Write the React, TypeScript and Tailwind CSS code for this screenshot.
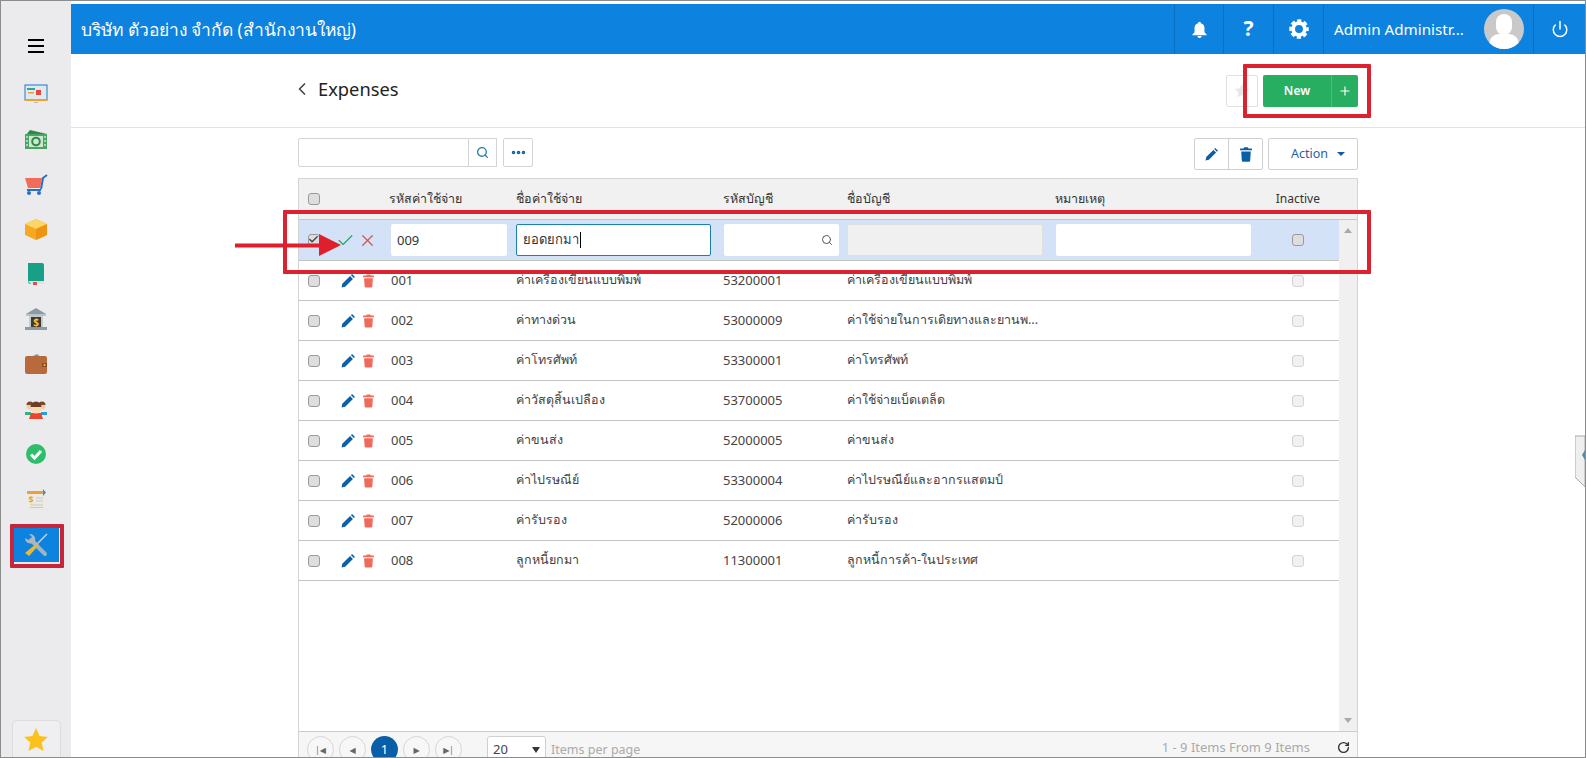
import { ChevronLeft, Search, MoreHorizontal, Plus, Power, RotateCw, Check, X } from 'lucide-react'

const FONT = "font-['Noto_Sans','Open_Sans','DejaVu_Sans',sans-serif]"
const GRID = 'grid grid-cols-[92px_125px_207px_124px_208px_205px_80px] items-center'

const ROWS = [
  ['001', 'ค่าเครื่องเขียนแบบพิมพ์', '53200001', 'ค่าเครื่องเขียนแบบพิมพ์'],
  ['002', 'ค่าทางด่วน', '53000009', 'ค่าใช้จ่ายในการเดิยทางและยานพ...'],
  ['003', 'ค่าโทรศัพท์', '53300001', 'ค่าโทรศัพท์'],
  ['004', 'ค่าวัสดุสิ้นเปลือง', '53700005', 'ค่าใช้จ่ายเบ็ดเตล็ด'],
  ['005', 'ค่าขนส่ง', '52000005', 'ค่าขนส่ง'],
  ['006', 'ค่าไปรษณีย์', '53300004', 'ค่าไปรษณีย์และอากรแสตมป์'],
  ['007', 'ค่ารับรอง', '52000006', 'ค่ารับรอง'],
  ['008', 'ลูกหนี้ยกมา', '11300001', 'ลูกหนี้การค้า-ในประเทศ'],
]

function Pencil({ className }: { className?: string }) {
  return (
    <svg viewBox="0 0 24 24" className={className} fill="currentColor">
      <path d="M1 23l1.200-6.200L15.500 3.500l5 5L7.200 21.800 1 23zM17 2l2-2 5 5-2 2-5-5z" />
    </svg>
  )
}

function Trash({ className }: { className?: string }) {
  return (
    <svg viewBox="0 0 20 24" className={className} fill="currentColor">
      <path d="M7 0h6l1 2h5a1 1 0 0 1 1 1v2H0V3a1 1 0 0 1 1-1h5l1-2zM2 7h16l-1 15a2 2 0 0 1-2 2H5a2 2 0 0 1-2-2L2 7z" />
    </svg>
  )
}

function Box({ light }: { light?: boolean }) {
  return (
    <span
      className={
        light
          ? 'block h-[12px] w-[12px] rounded-[3px] border border-[#d4d4d4] bg-[#f1f1f1]'
          : 'block h-[12px] w-[12px] rounded-[3px] border border-[#9a9a9a] bg-[#dedede]'
      }
    />
  )
}

function SideIcon({ children, active }: { children: React.ReactNode; active?: boolean }) {
  return (
    <div className={active ? 'flex h-[35px] w-[46px] items-center justify-center bg-[#0d82df]' : 'flex h-[45px] w-[46px] items-center justify-center'}>
      <svg viewBox="0 0 24 24" className="h-[24px] w-[24px]">
        {children}
      </svg>
    </div>
  )
}

function Sidebar() {
  return (
    <aside className="flex w-[70px] shrink-0 flex-col items-center bg-[#ebebed]">
      <div className="mt-[37px] mb-[17px] flex h-[16px] flex-col justify-between py-[1px]">
        <span className="block h-[2px] w-[16px] bg-black" />
        <span className="block h-[2px] w-[16px] bg-black" />
        <span className="block h-[2px] w-[16px] bg-black" />
      </div>
      <SideIcon>
        <rect x="1" y="3" width="22" height="15" fill="#dfe9f2" stroke="#3f8fc9" strokeWidth="1.2" />
        <rect x="1" y="17" width="22" height="2" fill="#f0a030" />
        <rect x="3" y="6" width="8" height="2" fill="#35a0a0" />
        <rect x="12" y="8" width="5" height="5" fill="#e4473d" />
        <rect x="4" y="10" width="6" height="1.5" fill="#f0a030" />
        <rect x="10" y="20" width="4" height="1" fill="#bbbbbb" />
      </SideIcon>
      <SideIcon>
        <path d="M2 8l4-5 17 4v2z" fill="#2f8a48" />
        <rect x="1" y="7" width="22" height="15" fill="#4aa564" />
        <rect x="5" y="9" width="14" height="11" fill="#cde8cf" />
        <circle cx="12" cy="14.500" r="3.800" fill="none" stroke="#2f8a48" strokeWidth="2" />
        <path d="M3 9v11M21 9v11" stroke="#cde8cf" strokeWidth="1.500" strokeDasharray="2 2" />
      </SideIcon>
      <SideIcon>
        <path d="M1 6h17l-2 10H4z" fill="#f26b5b" />
        <path d="M17 17l2-11 4-3" stroke="#2b6fc4" strokeWidth="2" fill="none" />
        <path d="M3 18h14" stroke="#2b6fc4" strokeWidth="2" />
        <circle cx="5" cy="21" r="2" fill="#2b6fc4" />
        <circle cx="15" cy="21" r="2" fill="#2b6fc4" />
      </SideIcon>
      <SideIcon>
        <path d="M1 7l11-5 11 5v11l-11 5-11-5z" fill="#f7a823" />
        <path d="M1 7l11-5 11 5-11 5z" fill="#fbd566" />
        <path d="M12 12l11-5v11l-11 5z" fill="#ee9412" />
      </SideIcon>
      <SideIcon>
        <path d="M4 1h14a2 2 0 0 1 2 2v19H7a3 3 0 0 1-3-3z" fill="#17a085" />
        <path d="M4 19h16v3H7z" fill="#d8e6e2" />
        <rect x="9" y="20" width="4" height="3" fill="#d9534f" />
      </SideIcon>
      <SideIcon>
        <path d="M12 1l10 6H2z" fill="#8d9aa3" />
        <rect x="2" y="7" width="20" height="2" fill="#b8c2c8" />
        <rect x="5" y="9" width="14" height="11" fill="#c6cdd2" />
        <rect x="7" y="10" width="10" height="10" fill="#3b3b30" />
        <text x="12" y="18.500" textAnchor="middle" fontSize="10" fontWeight="700" fill="#f2c33a">$</text>
        <rect x="1" y="20" width="22" height="3" fill="#8d9aa3" />
      </SideIcon>
      <SideIcon>
        <path d="M7 5l6-3 4 3z" fill="#4db6a0" />
        <rect x="1" y="4" width="22" height="18" rx="2" fill="#b96a3c" />
        <rect x="18" y="11" width="5" height="4" fill="#8c4d28" />
        <circle cx="20.500" cy="13" r="1" fill="#f2c33a" />
      </SideIcon>
      <SideIcon>
        <circle cx="6" cy="9" r="3.500" fill="#f7cda6" />
        <circle cx="18" cy="9" r="3.500" fill="#f7cda6" />
        <path d="M2.500 8a3.500 3.500 0 0 1 7 0zM14.500 8a3.500 3.500 0 0 1 7 0z" fill="#7a4a2c" />
        <path d="M1 15h6v3H1z" fill="#2fb38a" />
        <path d="M17 15h6v3h-6z" fill="#2d9bd8" />
        <path d="M5 22l2-6h10l2 6z" fill="#e8452e" />
        <circle cx="12" cy="11" r="5.500" fill="#fbd9b5" />
        <path d="M6.500 10a5.500 5.500 0 0 1 11 0z" fill="#6b3f25" />
      </SideIcon>
      <SideIcon>
        <circle cx="12" cy="12" r="10" fill="#2ebd6b" />
        <path d="M7 12.500l3.500 3.500L17 9" fill="none" stroke="#fff" strokeWidth="3" />
      </SideIcon>
      <SideIcon>
        <rect x="4" y="7" width="17" height="16" fill="#eceae4" />
        <rect x="3" y="4" width="16" height="3" fill="#e9a13b" />
        <path d="M19 2l3 3.500-3 3.500z" fill="#4a8fb5" />
        <text x="7" y="16" textAnchor="middle" fontSize="9" fontWeight="700" fill="#e9a13b">$</text>
        <path d="M12 11h7M12 14h7M6 18h13M6 20.500h13" stroke="#c9c9c9" />
      </SideIcon>
      <div className="mt-[6px]">
        <SideIcon active>
          <path d="M7 7l14 14" stroke="#9fb4c2" strokeWidth="4" strokeLinecap="round" />
          <path d="M23 1L12 12" stroke="#c9d3da" strokeWidth="1.500" />
          <path d="M1 20l12-10 2 2L5 23z" fill="#f0b62e" />
          <path d="M1 5a5.500 5.500 0 0 0 8 5l3 3 2-2-3-3a5.500 5.500 0 0 0-6-7l3 3-2.500 3.500z" fill="#aab8c2" />
        </SideIcon>
      </div>
      <div className="mt-auto flex h-[37px] w-[49px] items-start justify-center rounded-t-[5px] border border-b-0 border-[#dcdcdc] bg-[#efeff1] pt-[7px]">
        <svg viewBox="0 0 24 24" className="h-[24px] w-[24px]" fill="#fdc11e">
          <path d="M12 0l3.600 8 8.400.9-6.300 5.700 1.800 8.400L12 18.700 4.500 23l1.800-8.400L0 8.900 8.400 8z" />
        </svg>
      </div>
    </aside>
  )
}

function TopBar() {
  return (
    <header className="flex h-[50px] shrink-0 items-stretch bg-[#0d82df] text-white">
      <div className="flex-1 pl-[10px] text-[17.400px] leading-[50px]">บริษัท ตัวอย่าง จำกัด (สำนักงานใหญ่)</div>
      <div className="flex w-[49px] items-center justify-center border-l border-[#0b6fbf]">
        <svg viewBox="0 0 24 24" className="h-[17px] w-[17px]" fill="currentColor">
          <path d="M12 1a2 2 0 0 1 2 2 7 7 0 0 1 5 7v6l3 3v1H2v-1l3-3v-6a7 7 0 0 1 5-7 2 2 0 0 1 2-2zM9 21h6a3 3 0 0 1-6 0z" />
        </svg>
      </div>
      <div className="flex w-[50px] items-center justify-center border-l border-[#0b6fbf] text-[21px] font-bold">?</div>
      <div className="flex w-[50px] items-center justify-center border-l border-[#0b6fbf]">
        <svg viewBox="0 0 24 24" className="h-[20px] w-[20px]" fill="none" stroke="currentColor">
          <circle cx="12" cy="12" r="7" strokeWidth="4.500" />
          <circle cx="12" cy="12" r="10.200" strokeWidth="3" strokeDasharray="5 3.010" strokeDashoffset="2.500" />
        </svg>
      </div>
      <div className="flex w-[210px] items-center border-l border-[#0b6fbf] pl-[10px]">
        <span className="w-[150px] text-[15.200px]">Admin Administr...</span>
        <div className="relative h-[40px] w-[40px] overflow-hidden rounded-full bg-[#c9c9c9]">
          <span className="absolute top-[5px] left-[12px] h-[21px] w-[16px] rounded-full bg-white" />
          <span className="absolute top-[25px] left-[5px] h-[20px] w-[30px] rounded-t-[10px] bg-white" />
        </div>
      </div>
      <div className="flex w-[52px] items-center justify-center border-l border-[#0b6fbf]">
        <Power size={18} strokeWidth={2} />
      </div>
    </header>
  )
}

function EditRow() {
  const input = 'h-[32px] rounded-[2px] px-[6px] text-[13px] text-[#333]'
  return (
    <div className={`${GRID} h-[41px] border-b border-[#c4c4c4] bg-[#d3e2f7]`}>
      <div className="flex items-center pl-[9px]">
        <span className="relative block">
          <Box />
          <Check size={11} strokeWidth={3} className="absolute top-[0px] left-[0px] text-[#444]" />
        </span>
        <Check size={19} strokeWidth={1.5} className="ml-[16px] text-[#2fa36b]" />
        <X size={19} strokeWidth={1.5} className="ml-[3px] text-[#d9534f]" />
      </div>
      <div className={`${input} mr-[9px] bg-white leading-[32px]`}>009</div>
      <div className={`${input} mr-[12px] flex items-center border border-[#1e7fa8] bg-white text-[12.500px]`}>
        ยอดยกมา<span className="ml-[1px] h-[16px] w-px bg-black" />
      </div>
      <div className={`${input} mr-[8px] ml-[1px] flex items-center justify-end bg-white`}>
        <Search size={12} className="text-[#555]" />
      </div>
      <div className={`${input} mr-[12px] border border-[#e0e0e0] bg-[#f0f0f0]`} />
      <div className={`${input} mr-[9px] ml-[1px] bg-white`} />
      <div className="flex justify-center pr-[4px]">
        <Box />
      </div>
    </div>
  )
}

function DataRow({ row }: { row: string[] }) {
  return (
    <div className={`${GRID} h-[40px] border-b border-[#c4c4c4] text-[13px] text-[#444]`}>
      <div className="flex items-center pl-[9px]">
        <Box />
        <Pencil className="ml-[21px] h-[14px] w-[14px] text-[#0d5fa6]" />
        <Trash className="ml-[8px] h-[14px] w-[11px] text-[#ee6a5c]" />
      </div>
      <div className="truncate">{row[0]}</div>
      <div className="truncate text-[12.500px]">{row[1]}</div>
      <div className="truncate">{row[2]}</div>
      <div className="col-span-2 truncate text-[12.500px]">{row[3]}</div>
      <div className="col-start-7 flex justify-center pr-[4px]">
        <Box light />
      </div>
    </div>
  )
}

function Pager({ children, active }: { children: React.ReactNode; active?: boolean }) {
  return (
    <div
      className={
        active
          ? 'flex h-[27px] w-[27px] items-center justify-center rounded-full bg-[#0a5ea8] text-[13px] text-white'
          : 'flex h-[27px] w-[27px] items-center justify-center rounded-full border border-[#d5d5d5] bg-[#f7f7f7] text-[8px] text-[#666]'
      }
    >
      {children}
    </div>
  )
}

function Table() {
  return (
    <div className="flex min-h-0 flex-1 flex-col border border-b-0 border-[#d4d4d4]">
      <div className={`${GRID} h-[41px] shrink-0 border-b border-[#c8c8c8] bg-[#f1f1f1] pr-[18px] text-[12.500px] text-[#333]`}>
        <div className="pl-[9px]">
          <Box />
        </div>
        <div className="-ml-[2px]">รหัสค่าใช้จ่าย</div>
        <div>ชื่อค่าใช้จ่าย</div>
        <div>รหัสบัญชี</div>
        <div>ชื่อบัญชี</div>
        <div>หมายเหตุ</div>
        <div className="pr-[20px] text-right text-[12px]">Inactive</div>
      </div>
      <div className="flex min-h-0 flex-1">
        <div className="min-w-0 flex-1">
          <EditRow />
          {ROWS.map((r) => (
            <DataRow key={r[0]} row={r} />
          ))}
        </div>
        <div className="flex w-[18px] shrink-0 flex-col items-center justify-between bg-[#f0f0f0] py-[8px]">
          <span className="h-0 w-0 border-x-[4px] border-b-[5px] border-x-transparent border-b-[#aaa]" />
          <span className="h-0 w-0 border-x-[4px] border-t-[5px] border-x-transparent border-t-[#aaa]" />
        </div>
      </div>
      <footer className="flex h-[26px] shrink-0 items-start border-t border-[#cccccc] bg-[#f6f6f6] pt-[4px] pr-[7px] pl-[8px] text-[13px] text-[#aaa]">
        <div className="flex gap-[5px]">
          <Pager>|◀</Pager>
          <Pager>◀</Pager>
          <Pager active>1</Pager>
          <Pager>▶</Pager>
          <Pager>▶|</Pager>
        </div>
        <div className="ml-[25px] flex h-[27px] w-[59px] items-center justify-between rounded-[3px] border border-[#d0d0d0] bg-white px-[5px] text-[#444]">
          20
          <span className="h-0 w-0 border-x-[4px] border-t-[6px] border-x-transparent border-t-[#333]" />
        </div>
        <span className="ml-[5px] text-[12.500px] leading-[27px]">Items per page</span>
        <span className="ml-auto leading-[23px]">1 - 9 Items From 9 Items</span>
        <RotateCw size={13} strokeWidth={2.5} className="mt-[5px] ml-[27px] text-[#333]" />
      </footer>
    </div>
  )
}

export default function App() {
  return (
    <div className={`relative flex h-[758px] w-[1586px] overflow-hidden border border-[#8c8c8c] bg-white ${FONT}`}>
      <Sidebar />
      <main className="flex min-w-0 flex-1 flex-col pt-[3px]">
        <TopBar />
        <div className="flex h-[74px] shrink-0 items-center border-b border-[#e2e2e2] pr-[227px] pl-[227px]">
          <ChevronLeft size={20} className="-ml-[6px] -mt-[3px] text-[#444]" />
          <span className="-mt-[3px] ml-[6px] text-[18.300px] text-[#222]">Expenses</span>
          <div className="ml-auto flex h-[32px] w-[32px] items-center justify-center rounded-[2px] border border-[#e0e0e0]">
            <svg viewBox="0 0 24 24" className="h-[16px] w-[16px]" fill="#e8e8e8">
              <path d="M12 1l3.300 7 7.700.9-5.700 5.200 1.600 7.700L12 18l-6.900 3.800 1.600-7.700L1 8.900 8.700 8z" />
            </svg>
          </div>
          <div className="ml-[5px] flex h-[32px] w-[95px] items-stretch rounded-[2px] bg-[#27ae60] text-[12px] font-semibold text-white">
            <span className="flex w-[69px] items-center justify-center border-r border-[#4dbd7c]">New</span>
            <span className="flex flex-1 items-center justify-center">
              <Plus size={14} />
            </span>
          </div>
        </div>
        <div className="flex min-h-0 flex-1 flex-col px-[227px] pt-[10px]">
          <div className="mb-[8px] flex h-[32px] shrink-0 items-start">
            <div className="h-[29px] w-[171px] rounded-l-[2px] border border-[#d4d4d4]" />
            <div className="flex h-[29px] w-[28px] items-center justify-center border border-l-0 border-[#d4d4d4]">
              <Search size={13} strokeWidth={2.5} className="text-[#2a7fa8]" />
            </div>
            <div className="ml-[6px] flex h-[29px] w-[30px] items-center justify-center rounded-[2px] border border-[#d4d4d4]">
              <MoreHorizontal size={17} strokeWidth={3} className="text-[#0a5ea8]" />
            </div>
            <div className="ml-auto flex h-[32px] w-[69px] rounded-[2px] border border-[#d0d0d0]">
              <div className="flex w-[34px] items-center justify-center border-r border-[#d0d0d0]">
                <Pencil className="h-[13px] w-[13px] text-[#0a5ea8]" />
              </div>
              <div className="flex flex-1 items-center justify-center">
                <Trash className="h-[15px] w-[12px] text-[#0a5ea8]" />
              </div>
            </div>
            <div className="ml-[5px] flex h-[32px] w-[90px] items-center justify-end gap-[9px] rounded-[2px] border border-[#d0d0d0] pr-[12px] text-[12.500px] text-[#2a5f9e]">
              Action
              <span className="h-0 w-0 border-x-[4px] border-t-[4px] border-x-transparent border-t-[#0a5ea8]" />
            </div>
          </div>
          <Table />
        </div>
      </main>

      {/* red annotations drawn on top of the screenshot */}
      <div className="absolute top-[63px] left-[1242px] h-[54px] w-[128px] rounded-[1px] border-[4px] border-[#dc2230]" />
      <div className="absolute top-[209px] left-[282px] h-[64px] w-[1088px] rounded-[1px] border-[4px] border-[#dc2230]" />
      <div className="absolute top-[523px] left-[9px] h-[44px] w-[54px] rounded-[1px] border-[4px] border-[#c8243a]" />
      <svg className="absolute top-[230px] left-[232px] h-[30px] w-[110px]" viewBox="0 0 110 30">
        <path d="M2 12.500h84V3l22 11-22 11v-8.500H2z" fill="#e01f2d" />
      </svg>
      {/* slide-out tab on the right edge */}
      <svg className="absolute top-[434px] right-0 h-[53px] w-[10px]" viewBox="0 0 10 53">
        <path d="M10 1H0v41l10 10z" fill="#efefef" stroke="#aaaaaa" />
        <path d="M10 15l-3 5 3 5z" fill="#4b8fb0" />
      </svg>
    </div>
  )
}
